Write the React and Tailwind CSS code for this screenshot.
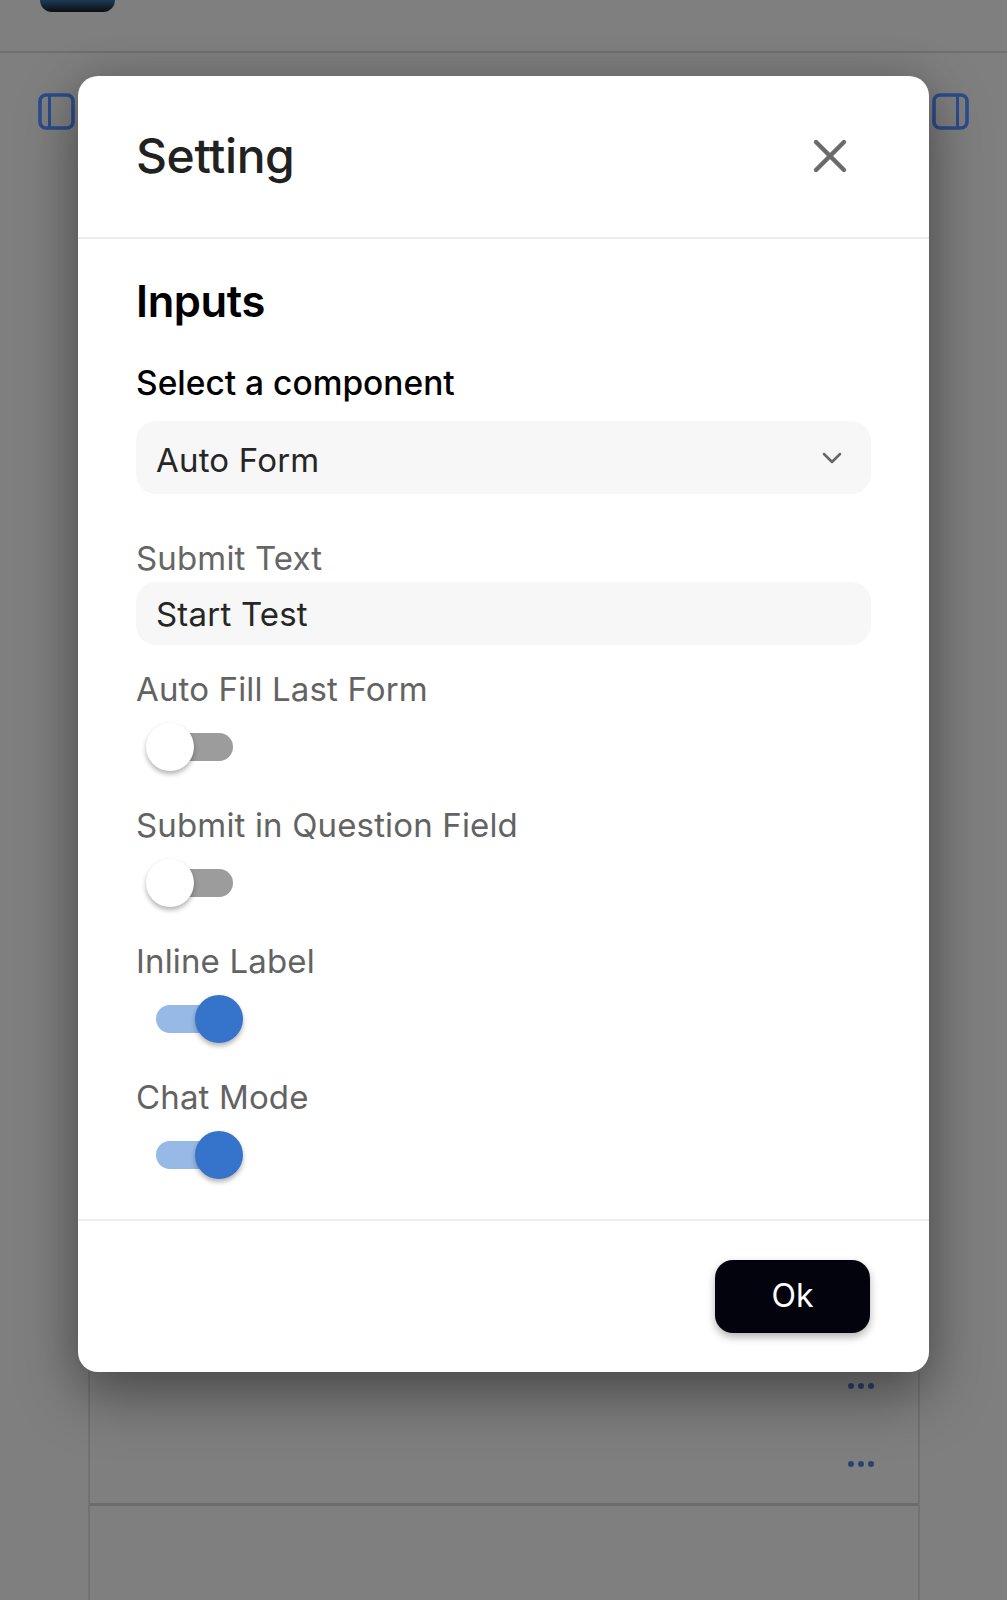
import { X, ChevronDown } from 'lucide-react';

function PanelIcon({ side }) {
  return (
    <svg width="37" height="37" viewBox="0 0 37 37" fill="none" stroke="#2d4c8c" strokeWidth="3.6">
      <rect x="2" y="2" width="33" height="33" rx="6" />
      {side === 'left' ? <path d="M11.5 2v33" strokeWidth="3" /> : <path d="M25.5 2v33" strokeWidth="3" />}
    </svg>
  );
}

function Dots() {
  return (
    <div className="flex gap-[4px]">
      <span className="w-[6px] h-[6px] rounded-full bg-[#2b4272]" />
      <span className="w-[6px] h-[6px] rounded-full bg-[#2b4272]" />
      <span className="w-[6px] h-[6px] rounded-full bg-[#2b4272]" />
    </div>
  );
}

function Toggle({ label, on }) {
  return (
    <div className="h-[136px] flex flex-col">
      <div className="h-[44px] flex items-center text-[33px] leading-[44px] text-[#636363] tracking-[0.15px]">{label}</div>
      <div className="relative w-[110px] h-[48px] mt-[12px]">
        <div className={on
          ? 'absolute left-[20px] top-[10px] w-[77px] h-[28px] rounded-full bg-[#97b9e6]'
          : 'absolute left-[20px] top-[10px] w-[77px] h-[28px] rounded-full bg-[#9c9c9c]'} />
        <div className={on
          ? 'absolute left-[59px] top-0 w-[48px] h-[48px] rounded-full bg-[#3674cc] shadow-[0_3px_5px_rgba(0,0,0,0.3)]'
          : 'absolute left-[10px] top-0 w-[48px] h-[48px] rounded-full bg-white shadow-[0_3px_5px_rgba(0,0,0,0.3)]'} />
      </div>
    </div>
  );
}

export default function App() {
  return (
    <div className="relative h-[1600px] overflow-hidden bg-[#7f7f7f] font-['Inter',sans-serif]">
      {/* Page behind the dialog */}
      <div className="h-[53px] border-b-2 border-[#6f6f6f] pl-[40px]">
        <div className="w-[75px] h-[12px] rounded-b-[14px] bg-linear-to-b from-[#1c3a58] to-[#0b0f14]" />
      </div>
      <div className="flex justify-between px-[38px] pt-[40px] h-[1319px]">
        <PanelIcon side="left" />
        <PanelIcon side="right" />
      </div>
      <div className="ml-[88px] w-[832px] h-[228px] border-x-2 border-[#727272]">
        <div className="h-[134px] flex flex-col items-end gap-[72px] pr-[44px] pt-[11px] border-b-[3px] border-[#6c6c6c]">
          <Dots />
          <Dots />
        </div>
      </div>

      {/* Dialog */}
      <div className="absolute left-[78px] top-[76px] w-[851px] h-[1296px] flex flex-col rounded-[20px] bg-white shadow-[0_24px_60px_rgba(0,0,0,0.38),0_0_40px_rgba(0,0,0,0.12)]">
        <div className="h-[163px] flex items-center justify-between pl-[58px] pr-[71px] border-b-2 border-[#ececec]">
          <h1 className="text-[48px] font-[450] text-[#212121] tracking-[-0.4px] -mt-[2px]">Setting</h1>
          <X size={56} strokeWidth={1.9} className="text-[#6b6b6b] -mt-[2px]" />
        </div>

        <div className="flex-1 px-[58px] flex flex-col">
          <h2 className="mt-[37px] h-[50px] leading-[50px] text-[43.5px] font-semibold text-black tracking-[-0.4px]">Inputs</h2>
          <label className="mt-[35px] h-[44px] leading-[44px] text-[33.5px] font-medium text-black">Select a component</label>
          <div className="mt-[16px] h-[73px] w-[735px] rounded-[20px] bg-[#f7f7f7] flex items-center justify-between pl-[20px] pr-[23px]">
            <span className="text-[33px] text-[#262626] tracking-[0.2px] pt-[7px]">Auto Form</span>
            <ChevronDown size={32} strokeWidth={1.9} className="text-[#666666]" />
          </div>
          <div className="mt-[42px] h-[44px] leading-[44px] text-[33px] text-[#666666] tracking-[0.15px]">Submit Text</div>
          <div className="mt-[2px] h-[63px] w-[735px] rounded-[20px] bg-[#f7f7f7] flex items-center pl-[20px] pt-[2px] text-[33px] text-[#262626] tracking-[0.2px]">Start Test</div>
          <div className="mt-[22px]">
            <Toggle label="Auto Fill Last Form" />
            <Toggle label="Submit in Question Field" />
            <Toggle label="Inline Label" on />
            <Toggle label="Chat Mode" on />
          </div>
        </div>

        <div className="h-[153px] border-t-2 border-[#ececec] flex justify-end pr-[59px] pt-[39px]">
          <button className="w-[155px] h-[73px] pb-[2px] rounded-[18px] bg-[#02030c] text-white text-[32px] shadow-[0_4px_8px_rgba(0,0,0,0.3)]">Ok</button>
        </div>
      </div>
    </div>
  );
}
